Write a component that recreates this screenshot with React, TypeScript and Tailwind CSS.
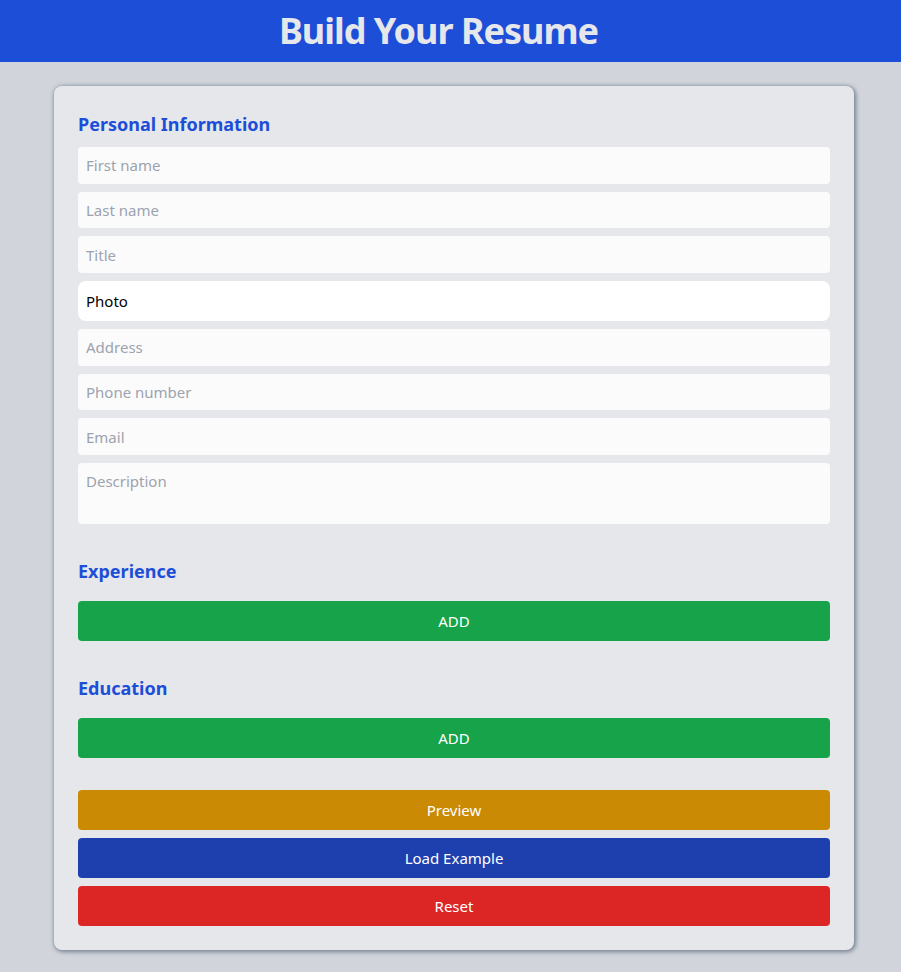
import React from "react";

const fields = ["First name", "Last name", "Title"];
const fields2 = ["Address", "Phone number", "Email"];

function Field({ placeholder }: { placeholder: string }) {
  return (
    <input
      placeholder={placeholder}
      className="h-[36.7px] w-full rounded-[4px] bg-[#fbfbfb] px-2 text-[15px] text-black outline-none placeholder:text-[#9ca3af]"
    />
  );
}

function Btn({ label, cls }: { label: string; cls: string }) {
  return (
    <button className={"h-10 w-full rounded-[4px] text-[15px] text-white " + cls}>{label}</button>
  );
}

export default function App() {
  return (
    <div className="min-h-[972px] bg-[#d1d5db] pb-[22px]" style={{ fontFamily: '"Noto Sans", "Open Sans", sans-serif' }}>
      <header className="flex h-[62px] items-center justify-center bg-[#1d4ed8] pr-6">
        <h1 className="text-[36px] font-bold tracking-[-1px] text-[#e5e7eb]">Build Your Resume</h1>
      </header>
      <div className="ml-[54px] mt-6 w-[800px] rounded-lg bg-[#e5e7eb] px-6 pb-6 pt-6 shadow-[1px_1px_4px_1px_rgba(71,85,105,0.65)]">
        <h2 className="h-7 text-[18px] font-bold leading-7 text-[#1d4ed8]">Personal Information</h2>
        <div className="mt-[9px] flex flex-col gap-2">
          {fields.map((f) => (
            <Field key={f} placeholder={f} />
          ))}
          <div className="flex h-10 items-center rounded-lg bg-white px-2 text-[15px] text-black">Photo</div>
          {fields2.map((f) => (
            <Field key={f} placeholder={f} />
          ))}
          <textarea
            placeholder="Description"
            className="h-[61px] w-full resize-none rounded-[4px] bg-[#fbfbfb] px-2 pt-[8px] text-[15px] leading-[20px] outline-none placeholder:text-[#9ca3af]"
          />
        </div>
        <h2 className="mt-[33px] h-7 text-[18px] font-bold leading-7 text-[#1d4ed8]">Experience</h2>
        <div className="mt-4">
          <Btn label="ADD" cls="bg-[#16a34a]" />
        </div>
        <h2 className="mt-[33px] h-7 text-[18px] font-bold leading-7 text-[#1d4ed8]">Education</h2>
        <div className="mt-4">
          <Btn label="ADD" cls="bg-[#16a34a]" />
        </div>
        <div className="mt-8 flex flex-col gap-2">
          <Btn label="Preview" cls="bg-[#ca8a04]" />
          <Btn label="Load Example" cls="bg-[#1e40af]" />
          <Btn label="Reset" cls="bg-[#dc2626]" />
        </div>
      </div>
    </div>
  );
}
